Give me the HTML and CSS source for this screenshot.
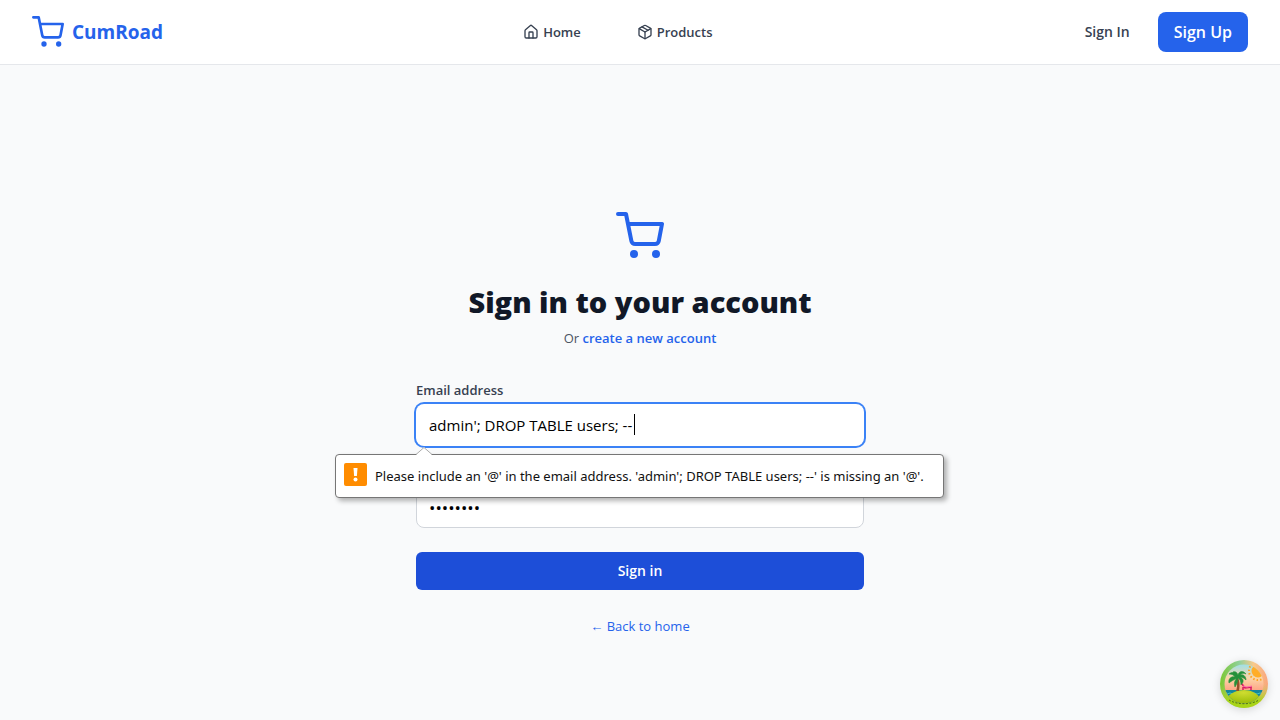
FILE: index.html
```html
<!DOCTYPE html>
<html lang="en">
<head>
<meta charset="utf-8">
<meta name="viewport" content="width=device-width, initial-scale=1">
<title>CumRoad - Sign in</title>
<link rel="stylesheet" href="styles.css">
</head>
<body>
<header class="header">
  <a class="brand" href="#">
    <svg class="icon icon-brand" viewBox="0 0 24 24"><circle cx="9" cy="21" r="1"/><circle cx="20" cy="21" r="1"/><path d="M1 1h4l2.68 13.39a2 2 0 0 0 2 1.61h9.72a2 2 0 0 0 2-1.61L23 6H6"/></svg>
    <span>CumRoad</span>
  </a>
  <nav class="nav">
    <a class="nav-link" href="#">
      <svg class="icon icon-nav" viewBox="0 0 24 24"><path d="M15 21v-8a1 1 0 0 0-1-1h-4a1 1 0 0 0-1 1v8"/><path d="M3 10a2 2 0 0 1 .709-1.528l7-5.999a2 2 0 0 1 2.582 0l7 5.999A2 2 0 0 1 21 10v9a2 2 0 0 1-2 2H5a2 2 0 0 1-2-2z"/></svg>
      <span>Home</span>
    </a>
    <a class="nav-link" href="#">
      <svg class="icon icon-nav" viewBox="0 0 24 24"><path d="m7.5 4.27 9 5.15"/><path d="M21 8a2 2 0 0 0-1-1.73l-7-4a2 2 0 0 0-2 0l-7 4A2 2 0 0 0 3 8v8a2 2 0 0 0 1 1.73l7 4a2 2 0 0 0 2 0l7-4A2 2 0 0 0 21 16Z"/><path d="m3.3 7 8.7 5 8.7-5"/><path d="M12 22V12"/></svg>
      <span>Products</span>
    </a>
  </nav>
  <div class="actions">
    <a class="nav-link" href="#">Sign In</a>
    <a class="signup" href="#">Sign Up</a>
  </div>
</header>
<main class="main">
  <div class="panel">
    <svg class="icon icon-hero" viewBox="0 0 24 24"><circle cx="9" cy="21" r="1"/><circle cx="20" cy="21" r="1"/><path d="M1 1h4l2.68 13.39a2 2 0 0 0 2 1.61h9.72a2 2 0 0 0 2-1.61L23 6H6"/></svg>
    <h1 class="title">Sign in to your account</h1>
    <p class="subtitle">Or <a class="create" href="#">create a new account</a></p>
    <form class="form" novalidate>
      <div class="field">
        <label class="label" for="email">Email address</label>
        <div class="control">
          <input class="input input-active" id="email" type="email" value="admin'; DROP TABLE users; --">
          <span class="caret"></span>
          <div class="tooltip" role="alert">
            <svg class="tip-arrow" viewBox="0 0 16 8"><path d="M0 8 8 0l8 8z" fill="#fff"/><path d="M0 7.500 8 .5l8 7" fill="none" stroke="#aaa"/></svg>
            <svg class="tip-icon" viewBox="0 0 23 23"><rect width="23" height="23" rx="2" fill="#ff8c00"/><path d="M9.500 5h4l-.6 8h-2.800z" fill="#fff"/><circle cx="11.500" cy="16.500" r="2" fill="#fff"/></svg>
            <span>Please include an '@' in the email address. 'admin'; DROP TABLE users; --' is missing an '@'.</span>
          </div>
        </div>
      </div>
      <div class="field">
        <label class="label" for="password">Password</label>
        <input class="input input-password" id="password" type="password" value="password">
      </div>
      <button class="submit" type="submit">Sign in</button>
    </form>
    <a class="back" href="#">← Back to home</a>
  </div>
</main>
<button class="badge" type="button" aria-label="Island">
  <svg class="badge-art" viewBox="0 0 48 48">
    <defs>
      <linearGradient id="rim" x1="0" y1="0" x2="1" y2="0"><stop offset="0" stop-color="#7cc832"/><stop offset=".4" stop-color="#8fd09a"/><stop offset=".7" stop-color="#f8c98c"/><stop offset="1" stop-color="#f9a57c"/></linearGradient>
      <linearGradient id="rimfoot" x1="0" y1="0" x2="0" y2="1"><stop offset=".5" stop-color="#b5cc50" stop-opacity="0"/><stop offset=".85" stop-color="#a8d418"/></linearGradient>
      <linearGradient id="sky" x1="0" y1="0" x2="0" y2="1"><stop offset="0" stop-color="#9ce0e8"/><stop offset=".35" stop-color="#fbd6a8"/><stop offset=".7" stop-color="#ff9f82"/></linearGradient>
      <radialGradient id="sand" cx=".5" cy=".2" r=".7"><stop offset="0" stop-color="#cfdc30"/><stop offset="1" stop-color="#9fc00c"/></radialGradient>
      <clipPath id="disc"><circle cx="24" cy="24" r="19.500"/></clipPath>
    </defs>
    <circle cx="24" cy="24" r="24" fill="url(#rim)"/>
    <circle cx="24" cy="24" r="24" fill="url(#rimfoot)"/>
    <g clip-path="url(#disc)">
      <path d="M4 4h40v40H4z" fill="url(#sky)"/>
      <circle cx="38" cy="11" r="6.500" fill="#ffad27"/>
      <circle cx="38" cy="11" r="9" fill="none" stroke="#ffa320" stroke-width="2" stroke-dasharray="1.500 2"/>
      <path d="M4 30h40v15H4z" fill="#14879c"/>
      <path d="M4 33l3 1 3-1 3 1 3-1 3 1 3-1 3 1 3-1 3 1 3-1 3 1 3-1 3 1" fill="none" stroke="#48bfc0"/>
      <path d="M6 39c4-6 11-9 18-9s13 3 17 9c-9 6-25 6-35 0z" fill="url(#sand)"/>
    </g>
    <path d="M17 16c3 4 3 9 2 15h-3c2-5 1-10-1-14z" fill="#96502a"/>
    <path d="M17 17c-1-4-4-6-8-3 3 0 5 1 6 3-4-1-7 2-6 6 2-2 5-3 8-5-3 3-3 6-2 9 2-3 3-6 3-9 2 1 3 4 3 7 3-3 3-6-1-8 2 0 4 1 6 3 0-4-3-6-6-5 2-2 4-2 6-1-3-4-7-3-8 1-1-3-3-4-5-3 2 1 3 3 4 5z" fill="#25913a" stroke="#25913a" stroke-width=".6"/>
    <path d="M22 24l3 4 7-1M23 30v-3M31 27v3" fill="none" stroke="#d71962" stroke-width="1.500"/>
    <path d="M23 26l4 1 5-1" fill="none" stroke="#ff72ae"/>
    <path d="M9 40c8 5 22 5 30 0" fill="none" stroke="#4e7416" stroke-dasharray="2 1.500"/>
  </svg>
</button>
</body>
</html>
```
FILE: styles.css
```css
*, *::before, *::after {
  box-sizing: border-box;
}

body {
  display: flex;
  flex-direction: column;
  min-height: 100vh;
  margin: 0;
  background: #f9fafb;
  color: #111827;
  font-family: "Segoe UI", "Open Sans", "Noto Sans", sans-serif;
  font-size: 16px;
  line-height: 24px;
}

a {
  color: inherit;
  text-decoration: none;
}

.icon {
  display: block;
  flex: none;
  fill: none;
  stroke: currentColor;
  stroke-width: 2;
  stroke-linecap: round;
  stroke-linejoin: round;
}

.icon-brand {
  width: 32px;
  height: 32px;
}

.icon-nav {
  width: 16px;
  height: 16px;
}

.icon-hero {
  width: 48px;
  height: 48px;
  margin: 0 auto 24px;
  color: #2563eb;
}

.header {
  display: flex;
  align-items: center;
  justify-content: space-between;
  padding: 12px 32px;
  background: #fff;
  border-bottom: 1px solid #e5e7eb;
}

.brand {
  display: flex;
  align-items: center;
  gap: 8px;
  color: #2563eb;
  font-size: 19px;
  font-weight: 700;
}

.nav {
  display: flex;
  gap: 32px;
}

.nav-link {
  display: flex;
  align-items: center;
  gap: 4px;
  padding: 0 12px;
  color: #374151;
  font-size: 13px;
  font-weight: 600;
}

.actions {
  display: flex;
  align-items: center;
  gap: 16px;
}

.actions .nav-link {
  font-size: 14px;
}

.signup {
  padding: 8px 16px;
  border-radius: 8px;
  background: #2563eb;
  color: #fff;
  font-weight: 600;
}

.main {
  display: flex;
  flex: 1;
  align-items: center;
  justify-content: center;
  padding: 65px 16px 0;
}

.panel {
  width: 100%;
  max-width: 448px;
  text-align: center;
}

.title {
  margin: 0;
  font-size: 29px;
  font-weight: 800;
  line-height: 36px;
}

.subtitle {
  margin: 8px 0 32px;
  color: #4b5563;
  font-size: 13px;
  line-height: 20px;
}

.create {
  color: #2563eb;
  font-weight: 600;
}

.form {
  display: grid;
  gap: 16px;
}

.field {
  display: grid;
  gap: 4px;
  text-align: left;
}

.label {
  color: #374151;
  font-size: 13px;
  font-weight: 600;
  line-height: 20px;
}

.control {
  position: relative;
}

.input {
  display: block;
  width: 100%;
  height: 42px;
  padding: 8px 12px;
  border: 1px solid #d1d5db;
  border-radius: 8px;
  background: #fff;
  color: #000;
  font: inherit;
  font-size: 15px;
}

.input-active {
  border-color: transparent;
  outline: none;
  box-shadow: 0 0 0 2px #3b82f6;
}

.input-password {
  font-size: 17px;
}

.caret {
  position: absolute;
  top: 10px;
  left: 218px;
  width: 1px;
  height: 21px;
  background: #000;
}

.tooltip {
  position: absolute;
  z-index: 1;
  top: 50px;
  left: -81px;
  display: flex;
  align-items: center;
  gap: 8px;
  min-width: 609px;
  height: 44px;
  padding: 0 8px;
  border: 1px solid #767676;
  border-radius: 4px;
  background: #fff;
  box-shadow: 3px 3px 5px rgba(0, 0, 0, 0.3);
  color: #111;
  font-family: "Segoe UI", "Noto Sans", sans-serif;
  font-size: 13px;
  white-space: nowrap;
}

.tip-arrow {
  position: absolute;
  top: -8px;
  left: 80px;
  width: 16px;
  height: 8px;
}

.tip-icon {
  flex: none;
  width: 23px;
  height: 23px;
  margin-bottom: 4px;
}

.submit {
  height: 38px;
  margin-top: 8px;
  border: 0;
  border-radius: 6px;
  background: #1d4ed8;
  color: #fff;
  font: inherit;
  font-size: 14px;
  font-weight: 600;
}

.back {
  display: inline-block;
  margin-top: 24px;
  color: #2563eb;
  font-size: 13px;
}

.badge {
  position: fixed;
  right: 12px;
  bottom: 12px;
  width: 48px;
  height: 48px;
  padding: 0;
  border: 0;
  border-radius: 50%;
  background: none;
  box-shadow: 0 2px 8px rgba(0, 0, 0, 0.15);
}

.badge-art {
  display: block;
}
```
